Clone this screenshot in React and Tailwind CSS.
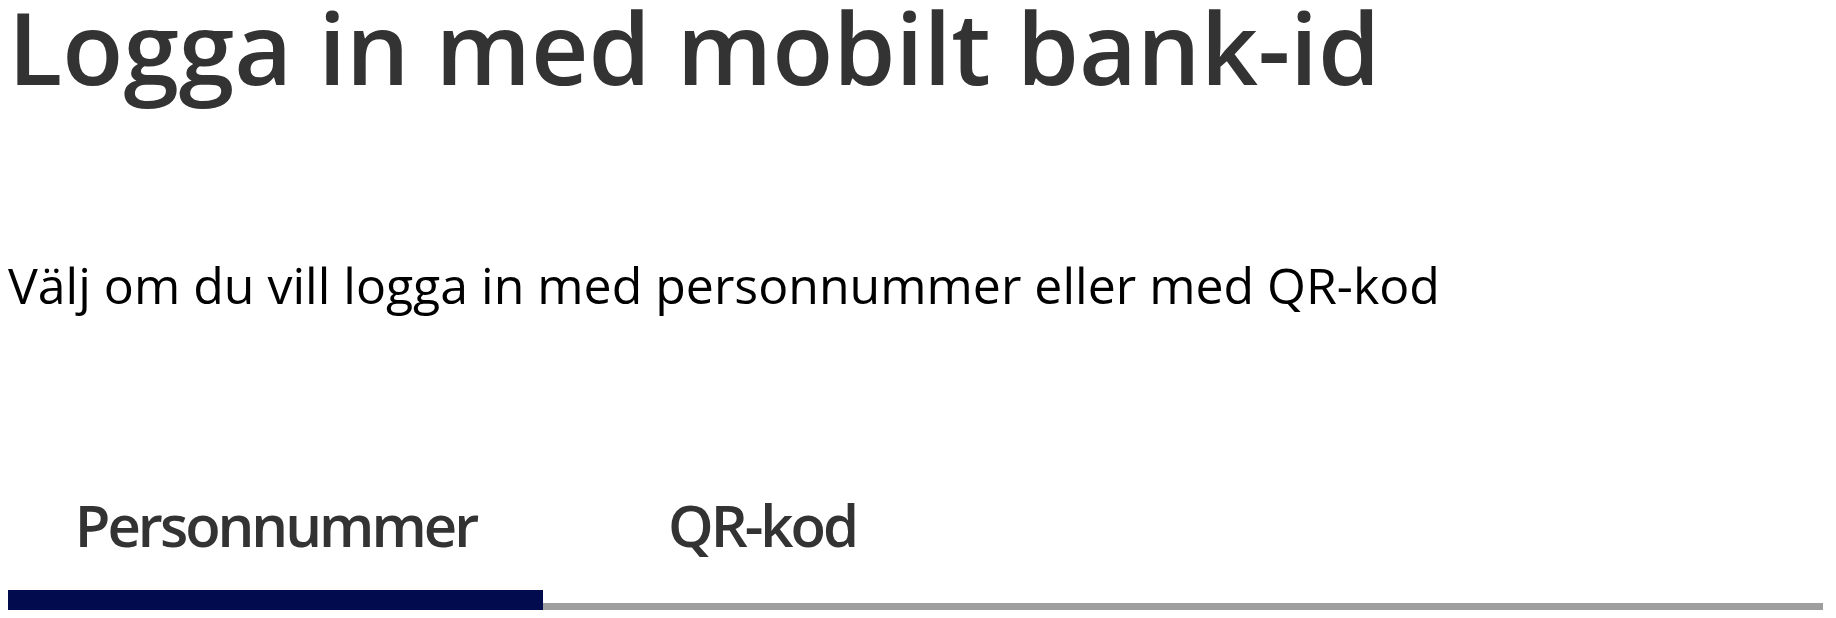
export default function App() {
  return (
    <div className="bg-white min-h-screen pl-2 pr-[13px] font-['Open_Sans',sans-serif]">
      <h1 className="m-0 text-[100px] leading-[93px] font-semibold text-[#333333]">
        Logga in med mobilt bank-id
      </h1>
      <p className="mt-[157px] text-[50px] leading-[70px] text-black">
        Välj om du vill logga in med personnummer eller med QR-kod
      </p>
      <div className="mt-[170px] flex items-start border-b-[7px] border-[#9e9e9e]">
        <button className="w-[535px] -mb-[7px] pb-[30px] border-b-[20px] border-[#020b4d] text-[58px] leading-[70px] tracking-[-3px] font-semibold text-[#333333]">
          Personnummer
        </button>
        <button className="ml-[62px] px-[63px] -mb-[7px] pb-[30px] border-b-[20px] border-transparent text-[58px] leading-[70px] tracking-[-3px] font-semibold text-[#333333]">
          QR-kod
        </button>
      </div>
    </div>
  );
}
